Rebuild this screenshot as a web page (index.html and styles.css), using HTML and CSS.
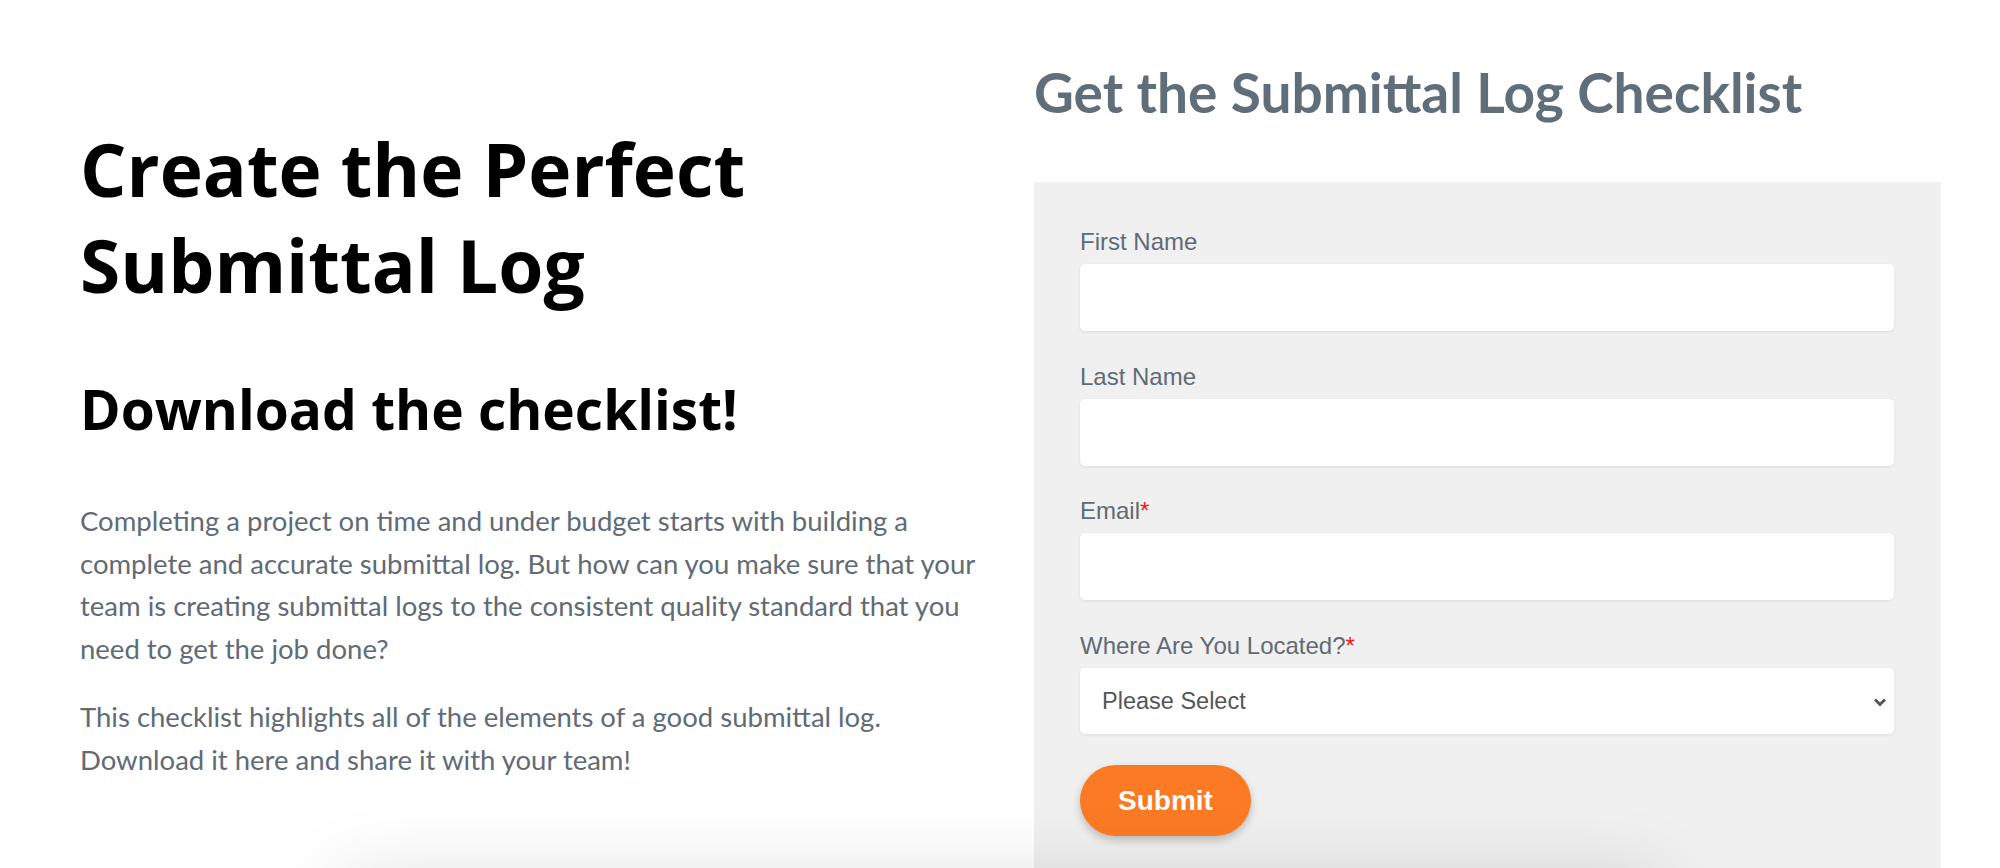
FILE: index.html
```html
<!DOCTYPE html>
<html lang="en">
<head>
<meta charset="utf-8">
<title>Submittal Log Checklist</title>
<link rel="stylesheet" href="styles.css">
</head>
<body>
<main class="hero">
  <section class="intro">
    <h1 class="intro-title">Create the Perfect Submittal Log</h1>
    <h2 class="intro-sub">Download the checklist!</h2>
    <p class="intro-text">Completing a project on time and under budget starts with building a complete and accurate submittal log. But how can you make sure that your team is creating submittal logs to the consistent quality standard that you need to get the job done?</p>
    <p class="intro-text">This checklist highlights all of the elements of a good submittal log. Download it here and share it with your team!</p>
  </section>
  <section class="signup">
    <h2 class="signup-title">Get the Submittal Log Checklist</h2>
    <form class="form-box">
      <div class="field">
        <label class="field-label" for="fn">First Name</label>
        <input class="field-input" id="fn" type="text">
      </div>
      <div class="field">
        <label class="field-label" for="ln">Last Name</label>
        <input class="field-input" id="ln" type="text">
      </div>
      <div class="field">
        <label class="field-label" for="em">Email<span class="req">*</span></label>
        <input class="field-input" id="em" type="email">
      </div>
      <div class="field">
        <label class="field-label" for="loc">Where Are You Located?<span class="req">*</span></label>
        <div class="select-wrap">
          <select class="field-input field-select" id="loc">
            <option>Please Select</option>
          </select>
          <svg class="chevron" width="14" height="10" viewBox="0 0 14 10"><path d="M2 2.5 L7 7.5 L12 2.5" fill="none" stroke="#555" stroke-width="2.8"/></svg>
        </div>
      </div>
      <button class="submit" type="button">Submit</button>
    </form>
  </section>
</main>
<div class="next-card"></div>
</body>
</html>
```

FILE: styles.css
```css
html, body {
  margin: 0;
  padding: 0;
  background: #ffffff;
}
body {
  overflow: hidden;
  height: 868px;
}
.hero {
  display: grid;
  grid-template-columns: 905px 907px;
  column-gap: 49px;
  padding-left: 80px;
}
.intro {
  padding-top: 121px;
}
.intro-title {
  margin: 0;
  font-family: "Open Sans", "Liberation Sans", sans-serif;
  font-weight: 700;
  font-size: 73px;
  line-height: 96px;
  color: #000;
  width: 760px;
}
.intro-sub {
  margin: 62px 0 0;
  font-family: "Open Sans", "Liberation Sans", sans-serif;
  font-weight: 700;
  font-size: 55px;
  line-height: 68px;
  color: #000;
}
.intro-text {
  margin: 57px 0 0;
  font-family: Lato, "Liberation Sans", sans-serif;
  font-size: 27.5px;
  line-height: 42.5px;
  color: #5f6b76;
}
.intro-text + .intro-text {
  margin-top: 26px;
}
.signup {
  padding-top: 60px;
}
.signup-title {
  margin: 0;
  font-family: Lato, "Liberation Sans", sans-serif;
  font-weight: 700;
  font-size: 55px;
  line-height: 65px;
  color: #5f6e79;
}
.form-box {
  margin-top: 57px;
  background: #f0f0f0;
  padding: 46px 47px 46px 46px;
  display: flex;
  flex-direction: column;
  align-items: flex-start;
}
.field {
  align-self: stretch;
  display: flex;
  flex-direction: column;
  gap: 8px;
  margin-bottom: 31.5px;
}
.field-label {
  font-family: "Liberation Sans", Arial, sans-serif;
  font-size: 24px;
  line-height: 28px;
  color: #5f6b76;
}
.req {
  color: #f2161e;
}
.field-input {
  box-sizing: border-box;
  width: 100%;
  height: 67px;
  border: none;
  border-radius: 5px;
  background: #fff;
  box-shadow: 0 1px 3px rgba(0, 0, 0, 0.09);
  font-family: "Liberation Sans", Arial, sans-serif;
  font-size: 23.5px;
  color: #555;
  padding: 0 22px;
}
.select-wrap {
  position: relative;
}
.field-select {
  appearance: none;
  -webkit-appearance: none;
  height: 66px;
}
.chevron {
  position: absolute;
  right: 7px;
  top: 29px;
}
.submit {
  width: 171px;
  height: 71px;
  border: none;
  border-radius: 36px;
  background: #fc7a24;
  color: #fff;
  font-family: "Liberation Sans", Arial, sans-serif;
  font-weight: 700;
  font-size: 28px;
  box-shadow: 0 4px 8px rgba(0, 0, 0, 0.22);
  padding: 0;
}
.next-card {
  position: relative;
  z-index: 1;
  width: 1320px;
  height: 300px;
  margin: 0 auto;
  background: #fff;
  box-shadow: 0 0 75px rgba(0, 0, 0, 0.15);
}
```
